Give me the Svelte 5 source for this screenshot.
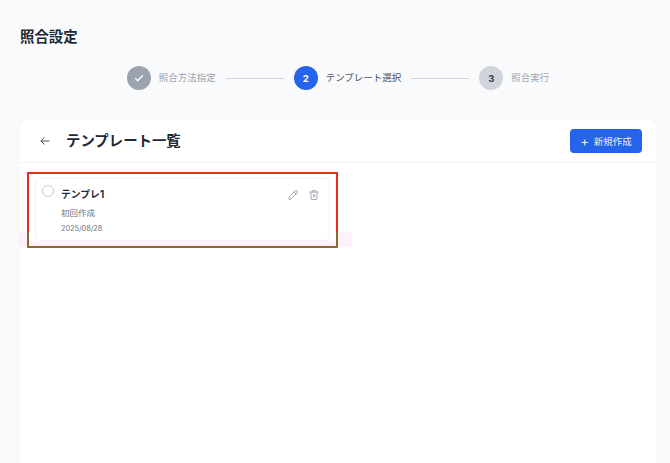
<script>
  const steps = [
    { label: '照合方法指定', state: 'done' },
    { label: 'テンプレート選択', state: 'active', n: 2 },
    { label: '照合実行', state: 'todo', n: 3 }
  ];
</script>

<div class="page">
  <h1>照合設定</h1>

  <div class="stepper">
    {#each steps as s, i}
      {#if i > 0}<span class="line"></span>{/if}
      <div class="step {s.state}">
        <span class="dot">
          {#if s.state === 'done'}
            <svg width="12" height="12" viewBox="0 0 24 24" fill="none" stroke="#fff" stroke-width="2.4" stroke-linecap="round" stroke-linejoin="round"><path d="M5 13l4.5 4.5L19 7.5"/></svg>
          {:else}
            {s.n}
          {/if}
        </span>
        <span class="label">{s.label}</span>
      </div>
    {/each}
  </div>

  <section class="card">
    <header>
      <div class="head-left">
        <svg class="back" width="12" height="12" viewBox="0 0 24 24" fill="none" stroke="#4b5563" stroke-width="2" stroke-linecap="round" stroke-linejoin="round"><path d="M20 12H4M10.5 5.5L4 12l6.500 6.500"/></svg>
        <h2>テンプレート一覧</h2>
      </div>
      <button class="new"><span class="plus">+</span>新規作成</button>
    </header>

    <div class="list">
      <div class="frame">
        <article class="tpl">
          <span class="radio"></span>
          <div class="body">
            <div class="name">テンプレ1</div>
            <div class="desc">初回作成</div>
            <div class="date">2025/08/28</div>
          </div>
          <div class="tools">
            <svg width="12" height="12" viewBox="0 0 24 24" fill="none" stroke="#9ca3af" stroke-width="1.8" stroke-linecap="round" stroke-linejoin="round"><path d="M4 20l1-5L16 4a2.100 2.100 0 0 1 4 4L9 19z"/><path d="M14 6l4 4"/></svg>
            <svg width="12" height="12" viewBox="0 0 24 24" fill="none" stroke="#9ca3af" stroke-width="1.8" stroke-linecap="round" stroke-linejoin="round"><path d="M3.500 6h17M9 6V3h6v3M5.500 6l1 15h11l1-15"/><path d="M10 11l4 5M14 11l-4 5"/></svg>
          </div>
        </article>
      </div>
    </div>
  </section>

  <div class="band"></div>
  <div class="mark"></div>
  <div class="mark-low"></div>
</div>

<style>
  :global(body) {
    margin: 0;
    background: #f9fafb;
  }
  .page {
    position: relative;
    box-sizing: border-box;
    height: 463px;
    padding: 29px 14px 0 20px;
    overflow: hidden;
    font-family: Inter, "Noto Sans CJK JP", sans-serif;
    color: #1f2937;
  }
  h1 {
    margin: 0;
    font-size: 14.4px;
    line-height: 16px;
    font-weight: 700;
    color: #1f2937;
  }
  .stepper {
    display: flex;
    align-items: center;
    justify-content: center;
    gap: 9px;
    margin-top: 21px;
    height: 24px;
  }
  .step {
    display: flex;
    align-items: center;
    gap: 8px;
  }
  .dot {
    width: 24px;
    height: 24px;
    border-radius: 50%;
    display: flex;
    align-items: center;
    justify-content: center;
    font-size: 9.5px;
    font-weight: 700;
  }
  .label {
    font-size: 9.500px;
    line-height: 14px;
    color: #9ca3af;
  }
  .done .dot { background: #9ca3af; }
  .active .dot { background: #2563eb; color: #fff; }
  .active .label { color: #4b5563; }
  .todo .dot { background: #d1d5db; color: #374151; }
  .line {
    width: 58px;
    height: 1px;
    background: #d1d5db;
    margin: 0 1px;
  }
  .card {
    margin-top: 30px;
    height: 343px;
    background: #fff;
    border-radius: 6px 6px 0 0;
    box-shadow: 0 0 2px rgba(0, 0, 0, 0.06);
  }
  header {
    height: 43px;
    box-sizing: border-box;
    padding: 0 14px 0 19px;
    display: flex;
    align-items: center;
    justify-content: space-between;
    border-bottom: 1px solid #f0f1f3;
  }
  .head-left {
    display: flex;
    align-items: center;
    gap: 15px;
  }
  h2 {
    margin: 0;
    font-size: 14.4px;
    line-height: 20px;
    font-weight: 700;
    color: #1f2937;
  }
  .new {
    width: 72px;
    height: 24px;
    padding: 0;
    border: 0;
    border-radius: 4px;
    background: #2563eb;
    color: #e8eefc;
    font: inherit;
    font-size: 9.500px;
    display: flex;
    align-items: center;
    justify-content: center;
    gap: 5px;
  }
  .plus { font-size: 13px; line-height: 12px; }
  .list {
    padding: 11px 320px 0 9px;
  }
  .frame {
    position: relative;
    z-index: 1;
    height: 67px;
    box-sizing: border-box;
    padding: 4px 6px 0;
    background: #fff;
  }
  .tpl {
    box-sizing: border-box;
    height: 63px;
    border: 1px solid #f1f2f4;
    border-radius: 4px;
    background: #fff;
    padding: 6px 10px 0 6px;
    display: flex;
    gap: 7px;
  }
  .radio {
    box-sizing: border-box;
    flex: none;
    width: 12px;
    height: 12px;
    border: 1px solid #c9cdd3;
    border-radius: 50%;
  }
  .body { flex: 1; padding-top: 2px; }
  .name {
    font-size: 9.800px;
    line-height: 15px;
    font-weight: 700;
    color: #1f2937;
  }
  .desc {
    margin-top: 5px;
    font-size: 8.500px;
    line-height: 12px;
    color: #6b7280;
  }
  .date {
    margin-top: 4px;
    font-size: 7.300px;
    line-height: 11px;
    color: #6b7280;
  }
  .tools {
    display: flex;
    gap: 9px;
    padding-top: 3px;
    padding-right: 0;
    height: 12px;
    transform: translate(1px, 1px);
  }
  .band {
    position: absolute;
    left: 19px;
    top: 232px;
    width: 333px;
    height: 15px;
    background: rgba(236, 72, 220, 0.08);
  }
  .mark {
    position: absolute;
    z-index: 2;
    box-sizing: border-box;
    left: 27px;
    top: 172px;
    width: 311px;
    height: 76px;
    border: 2px solid #ef2b1d;
    border-bottom-color: #8d6a2c;
  }
  .mark-low {
    position: absolute;
    z-index: 2;
    box-sizing: border-box;
    left: 27px;
    top: 232px;
    width: 311px;
    height: 16px;
    border: 2px solid #8d6a2c;
    border-top: 0;
  }
</style>
